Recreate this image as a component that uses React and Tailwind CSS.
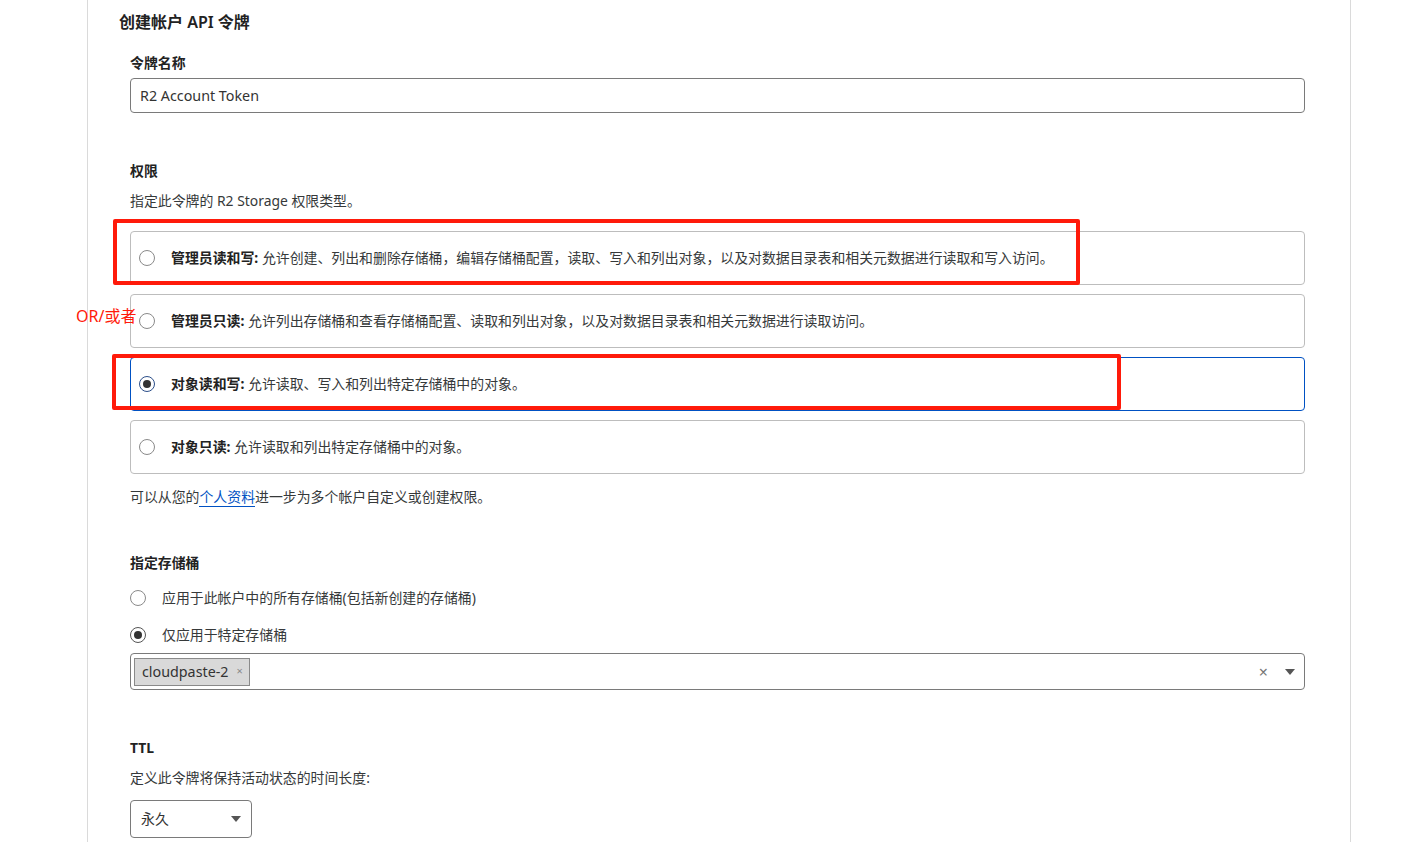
import React from "react";

const FONT = { fontFamily: '"Noto Sans", "Noto Sans CJK SC", sans-serif' };

const PERMISSIONS = [
  {
    id: "admin-rw",
    title: "管理员读和写:",
    desc: "允许创建、列出和删除存储桶，编辑存储桶配置，读取、写入和列出对象，以及对数据目录表和相关元数据进行读取和写入访问。",
  },
  {
    id: "admin-ro",
    title: "管理员只读:",
    desc: "允许列出存储桶和查看存储桶配置、读取和列出对象，以及对数据目录表和相关元数据进行读取访问。",
  },
  {
    id: "object-rw",
    title: "对象读和写:",
    desc: "允许读取、写入和列出特定存储桶中的对象。",
  },
  {
    id: "object-ro",
    title: "对象只读:",
    desc: "允许读取和列出特定存储桶中的对象。",
  },
];

function Radio({ checked, accent }) {
  return (
    <span
      className={`flex h-4 w-4 shrink-0 items-center justify-center rounded-full border bg-white ${
        checked ? (accent ? "border-[#2c4f8a]" : "border-[#555]") : "border-[#8a8a8a]"
      }`}
    >
      {checked && <span className="h-2 w-2 rounded-full bg-[#333]" />}
    </span>
  );
}

function Caret() {
  return (
    <svg width="10" height="6" viewBox="0 0 10 6">
      <path d="M0 0h10L5 6z" fill="#555" />
    </svg>
  );
}

function PermissionCard({ item, selected }) {
  return (
    <div
      className={`flex h-[54px] items-center gap-4 rounded-[4px] border pl-2 pr-4 ${
        selected ? "border-[#0051c3]" : "border-[#bdbdbd]"
      }`}
    >
      <Radio checked={selected} accent />
      <div className="text-[13.9px] leading-5 text-[#36393a]">
        <span className="font-bold text-[#222]">{item.title}</span> {item.desc}
      </div>
    </div>
  );
}

export default function App() {
  const selected = "object-rw";

  return (
    <div className="relative min-h-[842px] overflow-hidden bg-white" style={FONT}>
      <div className="ml-[87px] min-h-[842px] w-[1264px] border-x border-[#dadada] pl-[31px] pr-[45px] pt-[10px]">
        <h2 className="text-[16px] font-semibold leading-6 text-[#222]">创建帐户 API 令牌</h2>

        <div className="pl-[11px]">
          {/* token name */}
          <div className="mt-[19px] text-[13.9px] font-bold leading-5 text-[#222]">令牌名称</div>
          <div className="mt-[5px] flex h-[35px] items-center rounded-[4px] border border-[#7a7a7a] px-[9px] text-[14.3px] text-[#333]">
            R2 Account Token
          </div>

          {/* permissions */}
          <div className="mt-[48px] text-[13.9px] font-bold leading-5 text-[#222]">权限</div>
          <div className="mt-[10px] text-[13.9px] leading-5 text-[#36393a]">指定此令牌的 R2 Storage 权限类型。</div>
          <div className="mt-[20px] flex flex-col gap-[9px]">
            {PERMISSIONS.map((p) => (
              <PermissionCard key={p.id} item={p} selected={p.id === selected} />
            ))}
          </div>
          <div className="mt-[13px] text-[13.9px] leading-5 text-[#36393a]">
            可以从您的
            <a className="border-b border-[#0051c3] text-[#0051c3]">个人资料</a>
            进一步为多个帐户自定义或创建权限。
          </div>

          {/* buckets */}
          <div className="mt-[46px] text-[13.9px] font-bold leading-5 text-[#222]">指定存储桶</div>
          <label className="mt-[15px] flex h-5 items-center gap-4 text-[13.9px] text-[#36393a]">
            <Radio checked={false} />
            应用于此帐户中的所有存储桶(包括新创建的存储桶)
          </label>
          <label className="mt-[17px] flex h-5 items-center gap-4 text-[13.9px] text-[#36393a]">
            <Radio checked />
            仅应用于特定存储桶
          </label>
          <div className="mt-[8px] flex h-[37px] items-center rounded-[4px] border border-[#7a7a7a] pl-[3px] pr-[9px]">
            <span className="flex h-[28px] items-center gap-[8px] border border-[#8a8a8a] bg-[#d9d9d9] pl-[7px] pr-[6px] text-[14.3px] text-[#333]">
              cloudpaste-2
              <span className="text-[11px] text-[#888]">×</span>
            </span>
            <span className="ml-auto text-[16px] leading-none text-[#777]">×</span>
            <span className="ml-[17px] flex items-center">
              <Caret />
            </span>
          </div>

          {/* ttl */}
          <div className="mt-[48px] text-[13.9px] font-bold leading-5 text-[#222]">TTL</div>
          <div className="mt-[10px] text-[13.9px] leading-5 text-[#36393a]">定义此令牌将保持活动状态的时间长度:</div>
          <div className="mt-[12px] flex h-[38px] w-[122px] items-center justify-between rounded-[4px] border border-[#7a7a7a] pl-[10px] pr-[10px] text-[13.9px] text-[#333]">
            永久
            <Caret />
          </div>
        </div>
      </div>

      {/* red annotation boxes */}
      <div className="pointer-events-none absolute left-[113px] top-[219px] h-[66px] w-[967px] rounded-[2px] border-4 border-[#ff1a0a]" />
      <div className="pointer-events-none absolute left-[112px] top-[354px] h-[56px] w-[1009px] rounded-[2px] border-4 border-[#ff1a0a]" />
      <div className="pointer-events-none absolute left-[76px] top-[306px] text-[16px] leading-5 text-[#ff1a0a]">OR/或者</div>
    </div>
  );
}
